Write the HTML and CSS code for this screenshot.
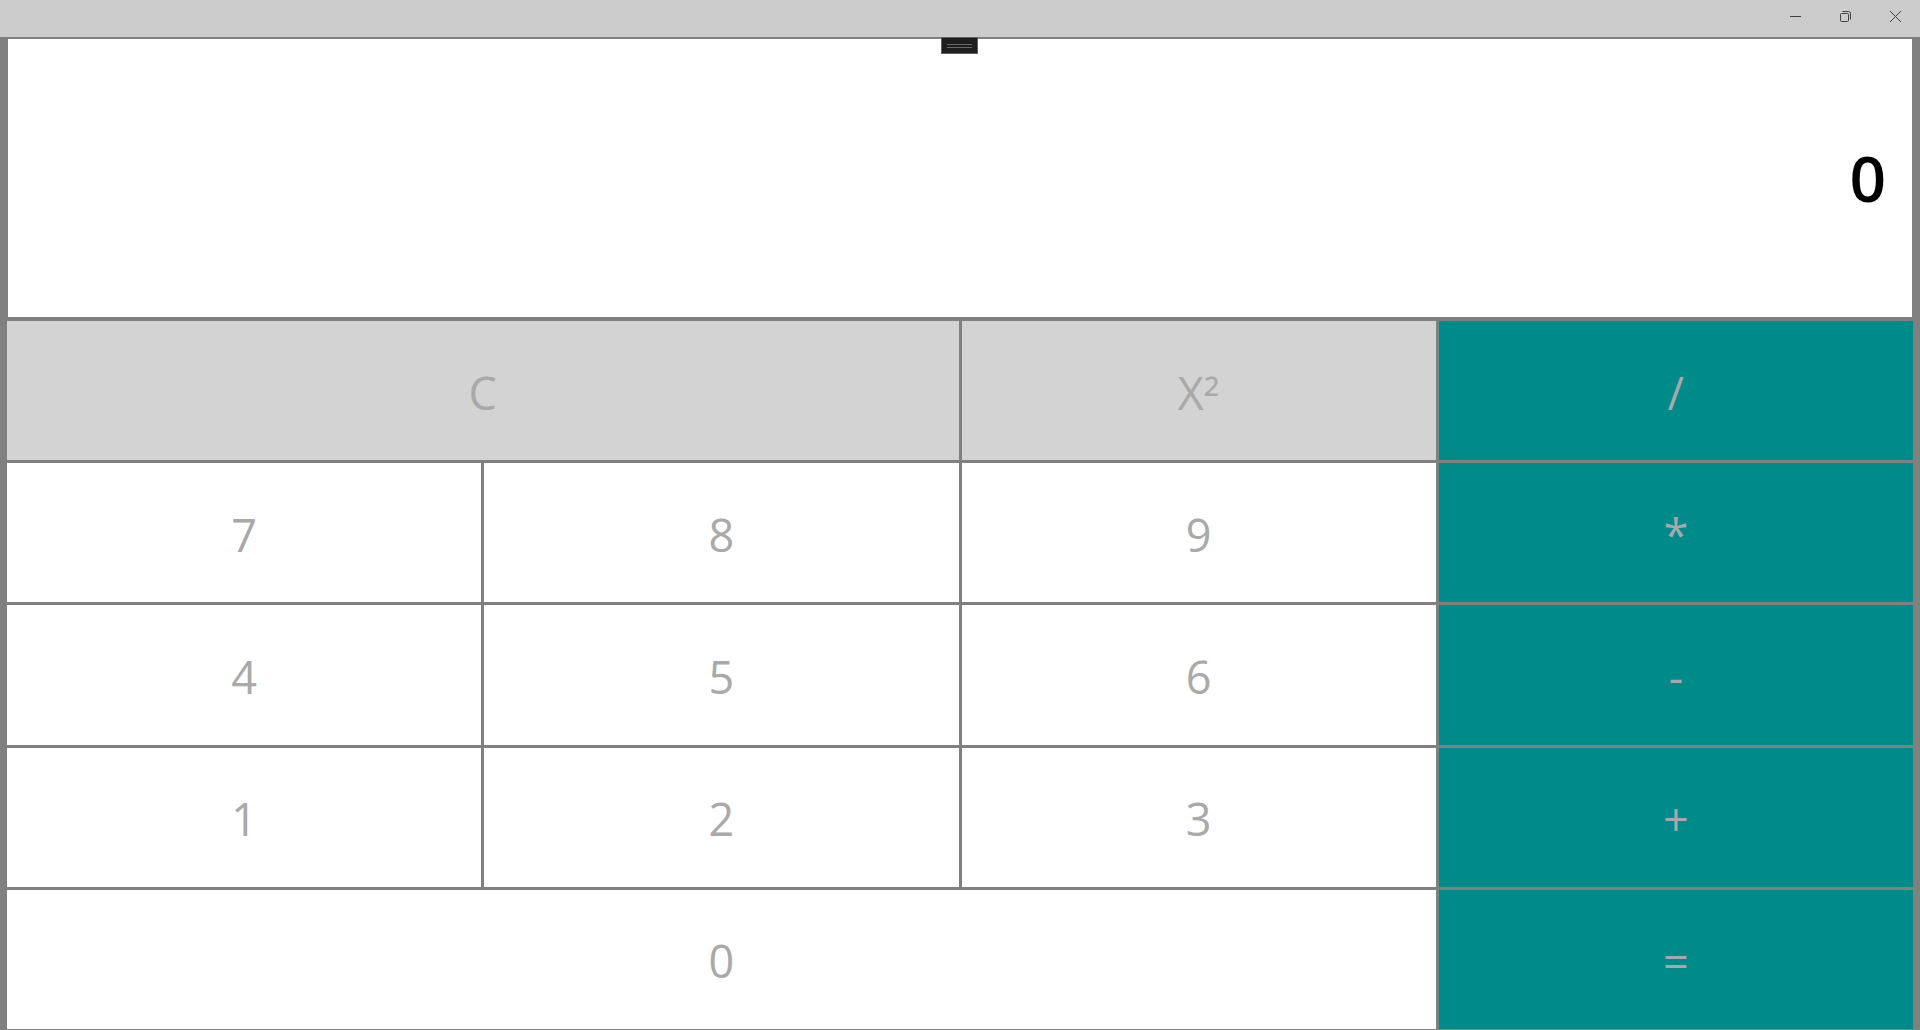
FILE: index.html
```html
<!DOCTYPE html>
<html lang="en">
<head>
<meta charset="utf-8">
<title>Calculator</title>
<link rel="stylesheet" href="styles.css">
</head>
<body>
<div class="window">
  <header class="titlebar">
    <button class="caption" type="button" aria-label="Minimize"><svg width="13" height="13" viewBox="0 0 13 13"><path d="M1 6.5h11"/></svg></button>
    <button class="caption" type="button" aria-label="Restore"><svg width="13" height="13" viewBox="0 0 13 13"><rect x="1.5" y="3.5" width="8" height="8" rx="1"/><path d="M3.5 1.5h6a2 2 0 0 1 2 2v6"/></svg></button>
    <button class="caption" type="button" aria-label="Close"><svg width="13" height="13" viewBox="0 0 13 13"><path d="M1 1l11 11M12 1L1 12"/></svg></button>
  </header>
  <main class="calculator">
    <button class="handle" type="button" aria-label="Toolbar"><span class="grip"></span></button>
    <output class="display">0</output>
    <div class="keypad">
      <button class="key function double" type="button">C</button>
      <button class="key function" type="button">X<span class="exponent">²</span></button>
      <button class="key operator" type="button">/</button>
      <button class="key" type="button">7</button>
      <button class="key" type="button">8</button>
      <button class="key" type="button">9</button>
      <button class="key operator" type="button">*</button>
      <button class="key" type="button">4</button>
      <button class="key" type="button">5</button>
      <button class="key" type="button">6</button>
      <button class="key operator" type="button">-</button>
      <button class="key" type="button">1</button>
      <button class="key" type="button">2</button>
      <button class="key" type="button">3</button>
      <button class="key operator" type="button">+</button>
      <button class="key triple" type="button">0</button>
      <button class="key operator" type="button">=</button>
    </div>
  </main>
</div>
</body>
</html>
```
FILE: styles.css
```css
* {
  box-sizing: border-box;
}

body {
  margin: 0;
  font-family: "Open Sans", "Noto Sans", sans-serif;
}

button {
  margin: 0;
  padding: 0;
  border: 0;
  font-family: inherit;
}

.window {
  display: flex;
  flex-direction: column;
  min-height: 100vh;
  background: #808080;
}

.titlebar {
  display: flex;
  justify-content: flex-end;
  height: 37px;
  padding-bottom: 4px;
  background: #cccccc;
}

.caption {
  display: flex;
  align-items: center;
  justify-content: center;
  width: 50px;
  background: transparent;
}

.caption svg {
  fill: none;
  stroke: #404040;
  stroke-width: 1;
}

.calculator {
  position: relative;
  flex: 1;
  display: grid;
  grid-template-rows: 11fr 28fr;
  gap: 4px;
  padding: 2px 7px 1px;
}

.display {
  display: flex;
  align-items: center;
  justify-content: flex-end;
  margin: 0 1px;
  padding: 0 26px;
  background: #ffffff;
  color: #000000;
  font-size: 64px;
  font-weight: 600;
  line-height: 1;
}

.handle {
  position: absolute;
  top: 0;
  left: 49%;
  width: 37px;
  height: 17px;
  border: 1px solid #606060;
  background: #1e1e1e;
}

.grip {
  display: block;
  width: 25px;
  height: 4px;
  margin: 0 auto;
  border: solid #686868;
  border-width: 1px 0;
}

.keypad {
  display: grid;
  grid-template-columns: repeat(4, 1fr);
  grid-template-rows: repeat(5, 1fr);
  gap: 3px;
}

.key {
  padding-top: 4px;
  background: #ffffff;
  color: #a9a9a9;
  font-size: 45px;
  line-height: 60px;
}

.function {
  background: #d3d3d3;
}

.operator {
  background: #008b8b;
}

.exponent {
  line-height: 0;
  vertical-align: -5px;
}

.double {
  grid-column: span 2;
}

.triple {
  grid-column: span 3;
}
```
